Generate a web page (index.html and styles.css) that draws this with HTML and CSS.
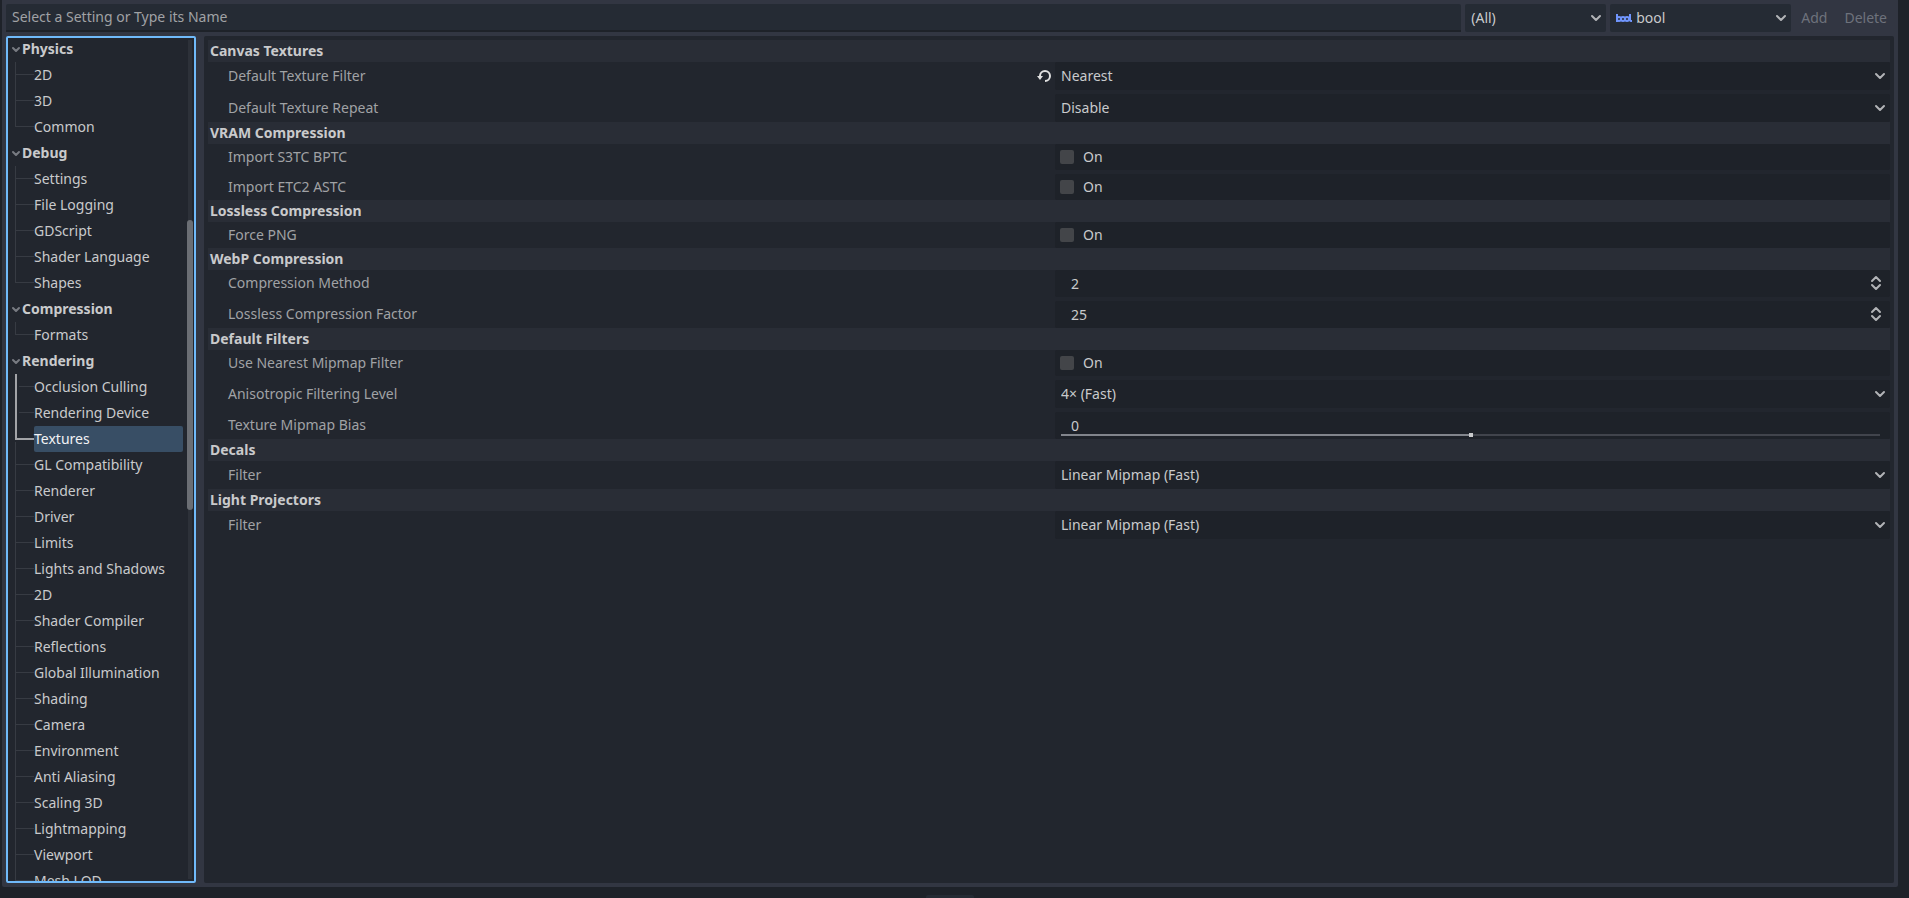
FILE: index.html
```
<!DOCTYPE html>
<html lang="en">
<head>
<meta charset="UTF-8">
<title>Project Settings</title>
<link rel="stylesheet" href="styles.css">
</head>
<body>

<!-- Shared icons -->
<svg class="sprite" aria-hidden="true">
  <symbol id="i-arrow" viewBox="0 0 12 12"><path d="M2 4l4 4 4-4" fill="none" stroke="currentColor" stroke-width="2" stroke-linecap="round" stroke-linejoin="round"/></symbol>
  <symbol id="i-updown" viewBox="0 0 12 16"><path d="M2 6l4-4 4 4M2 10l4 4 4-4" fill="none" stroke="currentColor" stroke-width="2" stroke-linecap="round" stroke-linejoin="round"/></symbol>
  <symbol id="i-fold" viewBox="0 0 12 12"><path d="M3 5l3 3 3-3" fill="none" stroke="currentColor" stroke-width="2" stroke-linecap="round" stroke-linejoin="round"/></symbol>
</svg>

<main class="window">

  <!-- Toolbar -->
  <div class="toolbar">
    <input class="search" type="text" placeholder="Select a Setting or Type its Name" aria-label="Setting name">
    <div class="dropdown feature">
      <select aria-label="Feature"><option>(All)</option></select>
      <svg class="arrow"><use href="#i-arrow"/></svg>
    </div>
    <div class="dropdown type">
      <svg class="type-icon" viewBox="0 0 16 16"><g fill="none" stroke="currentColor" stroke-width="2"><path d="M1 4v8"/><circle cx="3" cy="9" r="2"/><circle cx="7" cy="9" r="2"/><circle cx="11" cy="9" r="2"/><path d="M14 4v6q0 1 2 1"/></g></svg>
      <select aria-label="Type"><option>bool</option></select>
      <svg class="arrow"><use href="#i-arrow"/></svg>
    </div>
    <button class="flat" disabled>Add</button>
    <button class="flat" disabled>Delete</button>
  </div>

  <div class="split">

    <!-- Section tree -->
    <nav class="sections">
      <div class="tree">
        <div class="group"><svg><use href="#i-fold"/></svg>Physics</div>
        <ul>
          <li><a href="#">2D</a></li>
          <li><a href="#">3D</a></li>
          <li><a href="#">Common</a></li>
        </ul>
        <div class="group"><svg><use href="#i-fold"/></svg>Debug</div>
        <ul>
          <li><a href="#">Settings</a></li>
          <li><a href="#">File Logging</a></li>
          <li><a href="#">GDScript</a></li>
          <li><a href="#">Shader Language</a></li>
          <li><a href="#">Shapes</a></li>
        </ul>
        <div class="group"><svg><use href="#i-fold"/></svg>Compression</div>
        <ul>
          <li><a href="#">Formats</a></li>
        </ul>
        <div class="group"><svg><use href="#i-fold"/></svg>Rendering</div>
        <ul>
          <li class="path"><a href="#">Occlusion Culling</a></li>
          <li class="path"><a href="#">Rendering Device</a></li>
          <li class="selected"><a href="#" aria-current="page">Textures</a></li>
          <li><a href="#">GL Compatibility</a></li>
          <li><a href="#">Renderer</a></li>
          <li><a href="#">Driver</a></li>
          <li><a href="#">Limits</a></li>
          <li><a href="#">Lights and Shadows</a></li>
          <li><a href="#">2D</a></li>
          <li><a href="#">Shader Compiler</a></li>
          <li><a href="#">Reflections</a></li>
          <li><a href="#">Global Illumination</a></li>
          <li><a href="#">Shading</a></li>
          <li><a href="#">Camera</a></li>
          <li><a href="#">Environment</a></li>
          <li><a href="#">Anti Aliasing</a></li>
          <li><a href="#">Scaling 3D</a></li>
          <li><a href="#">Lightmapping</a></li>
          <li><a href="#">Viewport</a></li>
          <li class="more"><a href="#">Mesh LOD</a></li>
        </ul>
      </div>
      <div class="scrollbar"><div class="thumb"></div></div>
    </nav>

    <!-- Inspector -->
    <section class="inspector">
      <h2>Canvas Textures</h2>
      <div class="props">
        <div class="prop">
          <label for="tex-filter">Default Texture Filter</label>
          <button class="revert" aria-label="Revert"><svg viewBox="0 0 16 16"><path d="M9 13a5 5 0 1 0-5-5" fill="none" stroke="currentColor" stroke-width="2"/><path d="M1 8h6l-3 4z" fill="currentColor"/></svg></button>
          <div class="dropdown"><select id="tex-filter"><option>Nearest</option></select><svg class="arrow"><use href="#i-arrow"/></svg></div>
        </div>
        <div class="prop">
          <label for="tex-repeat">Default Texture Repeat</label>
          <div class="dropdown"><select id="tex-repeat"><option>Disable</option></select><svg class="arrow"><use href="#i-arrow"/></svg></div>
        </div>
      </div>

      <h2>VRAM Compression</h2>
      <div class="props">
        <div class="prop">
          <label for="s3tc">Import S3TC BPTC</label>
          <label class="check"><input type="checkbox" id="s3tc">On</label>
        </div>
        <div class="prop">
          <label for="etc2">Import ETC2 ASTC</label>
          <label class="check"><input type="checkbox" id="etc2">On</label>
        </div>
      </div>

      <h2>Lossless Compression</h2>
      <div class="props">
        <div class="prop">
          <label for="png">Force PNG</label>
          <label class="check"><input type="checkbox" id="png">On</label>
        </div>
      </div>

      <h2>WebP Compression</h2>
      <div class="props">
        <div class="prop">
          <label for="method">Compression Method</label>
          <div class="spin"><input type="number" id="method" value="2"><svg class="updown"><use href="#i-updown"/></svg></div>
        </div>
        <div class="prop">
          <label for="factor">Lossless Compression Factor</label>
          <div class="spin"><input type="number" id="factor" value="25"><svg class="updown"><use href="#i-updown"/></svg></div>
        </div>
      </div>

      <h2>Default Filters</h2>
      <div class="props">
        <div class="prop">
          <label for="nearest-mip">Use Nearest Mipmap Filter</label>
          <label class="check"><input type="checkbox" id="nearest-mip">On</label>
        </div>
        <div class="prop">
          <label for="aniso">Anisotropic Filtering Level</label>
          <div class="dropdown"><select id="aniso"><option>4× (Fast)</option></select><svg class="arrow"><use href="#i-arrow"/></svg></div>
        </div>
        <div class="prop">
          <label for="bias">Texture Mipmap Bias</label>
          <div class="spin">
            <input type="number" id="bias" value="0">
            <input type="range" min="-2" max="2" step="0.001" value="0" aria-label="Texture Mipmap Bias" style="--fill:50%">
          </div>
        </div>
      </div>

      <h2>Decals</h2>
      <div class="props">
        <div class="prop">
          <label for="decal-filter">Filter</label>
          <div class="dropdown"><select id="decal-filter"><option>Linear Mipmap (Fast)</option></select><svg class="arrow"><use href="#i-arrow"/></svg></div>
        </div>
      </div>

      <h2>Light Projectors</h2>
      <div class="props">
        <div class="prop">
          <label for="light-filter">Filter</label>
          <div class="dropdown"><select id="light-filter"><option>Linear Mipmap (Fast)</option></select><svg class="arrow"><use href="#i-arrow"/></svg></div>
        </div>
      </div>
    </section>

  </div>
</main>

<footer class="bottom"><div class="grabber"></div></footer>

</body>
</html>
```

FILE: styles.css
```
/* -------- RESET -------- */
*{margin:0;padding:0;box-sizing:border-box}

/* -------- ROOT -------- */
:root{
  --bg:#1e2229;
  --window:#323642;
  --panel:#22262e;
  --field:#252b34;
  --value:#1e2229;
  --category:#292d36;
  --focus:#70bafa;
  --text:#c9cacc;
  --sub:#a0a2a5;
  --disabled:#6e727c;
  --line:#373b43;
  --line-hl:#a2a3a7;
}

/* -------- BODY -------- */
body{
  font:14px/20px 'Noto Sans',sans-serif;
  background:var(--bg);
  color:var(--text);
  height:100vh;
  overflow:hidden;
  display:flex;
  flex-direction:column;
}
input,select,button{font:inherit;color:inherit;border:0;background:none;outline:0;appearance:none;min-width:0}
svg{display:block}
.sprite{display:none}

.window{
  flex:1;min-height:0;
  display:flex;flex-direction:column;gap:4px;
  margin:0 11px 0 2px;padding:4px;
  background:var(--window);
  border-radius:0 0 2px 2px;
}

/* TOOLBAR ----------------------------------------------------- */
.toolbar{display:flex;gap:4px;height:28px}
.search{
  flex:1;padding:0 6px;
  background:var(--field);
  border-bottom:2px solid var(--bg);
  border-radius:2px 2px 0 0;
}
.search::placeholder{color:var(--sub);opacity:1}
.flat{padding:0 7px 0 6px}
.flat:disabled{color:var(--disabled)}

/* DROPDOWNS --------------------------------------------------- */
.dropdown{display:grid;align-items:center;height:28px;background:var(--field);border-radius:2px}
.dropdown > *{grid-area:1/1}
.dropdown select{width:100%;height:28px;padding:0 20px 0 6px}
.arrow{width:12px;height:12px;margin-right:4px;justify-self:end;pointer-events:none;color:#b2b4b7}
.feature{width:141px}
.type{width:181px}
.dropdown.type select{padding-left:26px}
.type-icon{width:16px;height:16px;margin-left:6px;color:#7095fc}

/* SPLIT ------------------------------------------------------- */
.split{flex:1;min-height:0;display:flex;gap:8px}

/* SECTION TREE ------------------------------------------------ */
.sections{
  width:190px;display:flex;
  background:var(--panel);
  outline:2px solid var(--focus);outline-offset:-2px;
  border-radius:2px;overflow:hidden;
}
.tree{flex:1;height:100%;overflow:hidden;padding-left:4px}
.group{display:flex;align-items:center;height:26px;font-weight:700}
.group svg{width:12px;height:12px;color:#787b82}
.tree ul{list-style:none;margin-left:5px}
.tree li{
  height:26px;padding-left:19px;
  background:
    linear-gradient(var(--line),var(--line)) 0 0/1px 100% no-repeat,
    linear-gradient(var(--line),var(--line)) 0 12px/19px 1px no-repeat;
}
.tree li:last-child:not(.more){background-size:1px 13px,19px 1px}
.tree li.path{
  background:
    linear-gradient(var(--line-hl),var(--line-hl)) 0 0/2px 100% no-repeat,
    linear-gradient(var(--line),var(--line)) 4px 12px/15px 1px no-repeat;
}
.tree li.selected{
  background:
    linear-gradient(var(--line-hl),var(--line-hl)) 0 0/2px 14px no-repeat,
    linear-gradient(var(--line-hl),var(--line-hl)) 0 12px/19px 2px no-repeat,
    linear-gradient(var(--line),var(--line)) 0 16px/1px 10px no-repeat;
}
.tree a{display:block;line-height:26px;color:inherit;text-decoration:none;white-space:nowrap;border-radius:2px}
.tree .selected a{background:#384e65;color:#f2f3f5}

.scrollbar{width:6px;margin:4px 3px 4px 4px;background:linear-gradient(#2d3139,#2d3139) center/4px 100% no-repeat}
.thumb{width:6px;height:290px;margin-top:180px;border-radius:3px;background:#6b6e74}

/* INSPECTOR --------------------------------------------------- */
.inspector{flex:1;padding:4px;background:var(--panel);border-radius:2px;overflow:hidden}
.inspector h2{
  padding:0 2px;
  font-size:14px;line-height:22px;font-weight:700;
  background:var(--category);
}
.props{display:flex;flex-direction:column;gap:4px;padding-left:12px}
.prop{display:grid;grid-template-columns:1fr 1fr;align-items:center}
.prop > label:first-child{grid-area:1/1;padding:0 0 1px 8px;color:var(--sub)}
.prop > :last-child{grid-area:1/2;background:var(--value);border-radius:2px}
.revert{grid-area:1/1;justify-self:end;margin-right:3px}
.revert svg{width:16px;height:16px;color:#e0e0e0}

.check{display:flex;align-items:center;gap:9px;height:26px;padding-left:5px}
.check input{width:14px;height:14px;border-radius:2px;background:#434549}
.check input:checked{background:var(--focus)}

.spin{display:grid;align-items:center;height:27px;padding-bottom:1px}
.spin > *{grid-area:1/1}
.spin input[type=number]{width:100%;height:26px;padding:0 16px;appearance:textfield}
.spin input::-webkit-inner-spin-button{appearance:none;margin:0}
.updown{width:12px;height:16px;margin-right:8px;justify-self:end;color:#b2b4b7}
.spin input[type=range]{
  align-self:end;height:4px;margin:0 10px 1px 6px;
  background:linear-gradient(90deg,#82858c var(--fill),#41444c var(--fill)) center/100% 2px no-repeat;
}
.spin input[type=range]::-webkit-slider-thumb{appearance:none;width:4px;height:4px;background:#c9cacc}

/* BOTTOM ------------------------------------------------------ */
.bottom{height:11px;display:flex;align-items:flex-end;justify-content:center;padding-right:9px}
.grabber{width:48px;height:3px;background:var(--field);border-radius:2px 2px 0 0}
```
